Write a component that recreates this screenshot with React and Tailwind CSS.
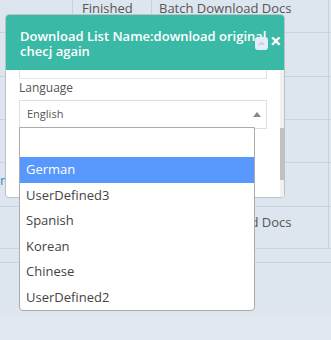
import React from "react";

const LANGUAGES = ["German", "UserDefined3", "Spanish", "Korean", "Chinese", "UserDefined2"];

const Row = ({ h, children }) => (
  <div className={`flex border-b border-[#c9d3de] ${h}`}>{children}</div>
);

const BackgroundTable = () => {
  return (
    <div className="-mt-[7px] text-[13px] text-[#555]">
      <Row h="h-[40px]">
        <div className="w-[73px] border-r border-[#c9d3de]" />
        <div className="w-[79px] border-r border-[#c9d3de] pl-[9px] pt-[6px]">Finished</div>
        <div className="w-[177px] border-r border-[#c9d3de] pl-[7px] pt-[6px] whitespace-nowrap">
          Batch Download Docs
        </div>
      </Row>
      <Row h="h-[44px]">
        <div className="w-[329px] border-r border-[#c9d3de]" />
      </Row>
      <Row h="h-[43px]">
        <div className="w-[329px] border-r border-[#c9d3de]" />
      </Row>
      <Row h="h-[43px]">
        <div className="w-[329px] border-r border-[#c9d3de]" />
      </Row>
      <Row h="h-[44px]">
        <div className="w-[14px] pt-[8px] whitespace-nowrap text-[#3c8dbc]">nt</div>
        <div className="w-[315px] border-r border-[#c9d3de]" />
      </Row>
      <Row h="h-[42px]">
        <div className="w-[152px]" />
        <div className="w-[177px] border-r border-[#c9d3de] pl-[7px] pt-[6px] whitespace-nowrap">
          Batch Download Docs
        </div>
      </Row>
      <Row h="h-[14px]">
        <div />
      </Row>
      <div className="h-[52px]" />
      <div className="h-[40px] bg-[#e2e8ef]" />
    </div>
  );
};

const Modal = () => {
  return (
    <div className="absolute left-[5px] top-[14px] w-[280px] h-[184px] rounded-[4px] border border-[#b9c1c9] bg-white overflow-hidden">
      <div className="relative h-[55px] bg-[#3bb9a7] pl-[14px] pt-[14px]">
        <h4 className="w-[250px] text-[13px] font-semibold leading-[15px] text-white">
          Download List Name:download original checj again
        </h4>
        <div className="absolute left-[249px] top-[22px] w-[13px] h-[13px] rounded-[3px] bg-[#e3ecf7] flex items-center justify-center">
          <svg width="7" height="5" viewBox="0 0 7 5">
            <path d="M1 4 L3.5 1.5 L6 4" fill="none" stroke="#b7cde6" strokeWidth="1.2" />
          </svg>
        </div>
        <span className="absolute left-[264px] top-[16px] text-[20px] font-bold leading-[20px] text-white">
          ×
        </span>
      </div>
      <div className="flex h-[128px]">
        <div className="w-[274px] overflow-hidden px-[13px]">
          <div className="-mt-[21px] h-[30px] border border-[#e3e3e3]" />
          <label className="block text-[12px] leading-[17px] text-[#555]">Language</label>
          <div className="mt-[4px] h-[29px] border border-[#e0e0e0] flex items-center justify-between pl-[7px] pr-[5px]">
            <span className="text-[11px] text-[#555]">English</span>
            <svg width="8" height="5" viewBox="0 0 8 5">
              <path d="M0 5 L4 0 L8 5 Z" fill="#888" />
            </svg>
          </div>
        </div>
        <div className="w-[4px] bg-[#f1f1f1] pt-[58px]">
          <div className="h-[52px] bg-[#c1c1c1]" />
        </div>
      </div>
    </div>
  );
};

const Dropdown = () => {
  return (
    <div className="absolute left-[19px] top-[127px] w-[236px] h-[184px] border border-[#aaa] rounded-b-[4px] bg-white">
      <div className="h-[29px]" />
      {LANGUAGES.map((lang, i) => (
        <div
          key={lang}
          className={`h-[25.5px] pl-[6px] flex items-center text-[13px] ${
            i === 0 ? "bg-[#5897fb] text-white" : "text-[#444]"
          }`}
        >
          {lang}
        </div>
      ))}
    </div>
  );
};

export default function App() {
  return (
    <div
      className="relative w-[331px] h-[340px] overflow-hidden bg-[#dde5ee]"
      style={{ fontFamily: '"Open Sans", sans-serif' }}
    >
      <BackgroundTable />
      <Modal />
      <Dropdown />
    </div>
  );
}
